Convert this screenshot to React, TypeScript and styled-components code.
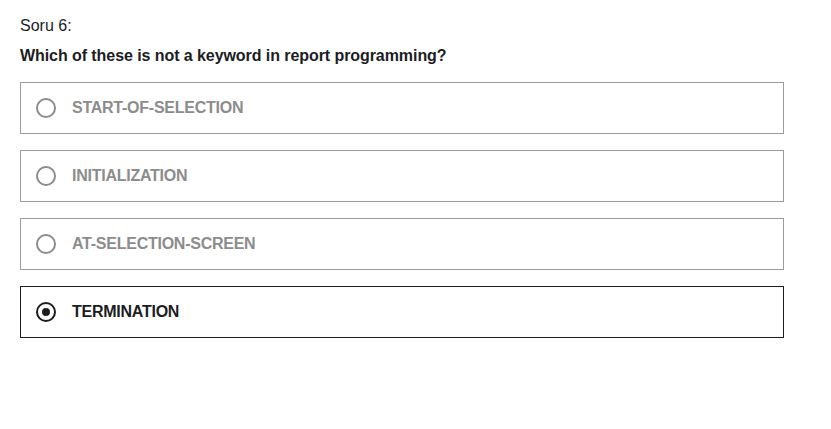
import React, { useState } from "react";
import styled, { createGlobalStyle } from "styled-components";

const Global = createGlobalStyle`
  html, body { margin: 0; padding: 0; background: #fff; }
  body { font-family: "Liberation Sans", Arial, sans-serif; color: #1c1d1f; }
`;

const Page = styled.div`
  padding: 16px 47px 0 20px;
`;

const Label = styled.div`
  font-size: 16px;
  line-height: 20px;
  color: #1c1d1f;
`;

const Question = styled.div`
  margin-top: 10px;
  font-size: 16px;
  font-weight: 700;
  line-height: 20px;
  letter-spacing: -0.07px;
  color: #1c1d1f;
`;

const Options = styled.div`
  margin-top: 16px;
  display: flex;
  flex-direction: column;
  gap: 16px;
`;

const Option = styled.label<{ $selected: boolean }>`
  display: flex;
  align-items: center;
  gap: 16px;
  height: 52px;
  box-sizing: border-box;
  padding: 0 15px;
  border: 1px solid ${(p) => (p.$selected ? "#1c1d1f" : "#9b9b9b")};
  cursor: pointer;
`;

const Radio = styled.span<{ $selected: boolean }>`
  width: 20px;
  height: 20px;
  box-sizing: border-box;
  border-radius: 50%;
  border: 2px solid ${(p) => (p.$selected ? "#1c1d1f" : "#8c8c8c")};
  display: flex;
  align-items: center;
  justify-content: center;
  &::after {
    content: "";
    display: ${(p) => (p.$selected ? "block" : "none")};
    width: 8px;
    height: 8px;
    border-radius: 50%;
    background: #1c1d1f;
  }
`;

const OptionText = styled.span<{ $selected: boolean }>`
  font-size: 16px;
  font-weight: 700;
  letter-spacing: -0.25px;
  color: ${(p) => (p.$selected ? "#1c1d1f" : "#8c8c8c")};
`;

const options = [
  "START-OF-SELECTION",
  "INITIALIZATION",
  "AT-SELECTION-SCREEN",
  "TERMINATION",
];

export default function App() {
  const [sel, setSel] = useState(3);
  return (
    <>
      <Global />
      <Page>
        <Label>Soru 6:</Label>
        <Question>Which of these is not a keyword in report programming?</Question>
        <Options>
          {options.map((o, i) => (
            <Option key={o} $selected={sel === i} onClick={() => setSel(i)}>
              <Radio $selected={sel === i} />
              <OptionText $selected={sel === i}>{o}</OptionText>
            </Option>
          ))}
        </Options>
      </Page>
    </>
  );
}
